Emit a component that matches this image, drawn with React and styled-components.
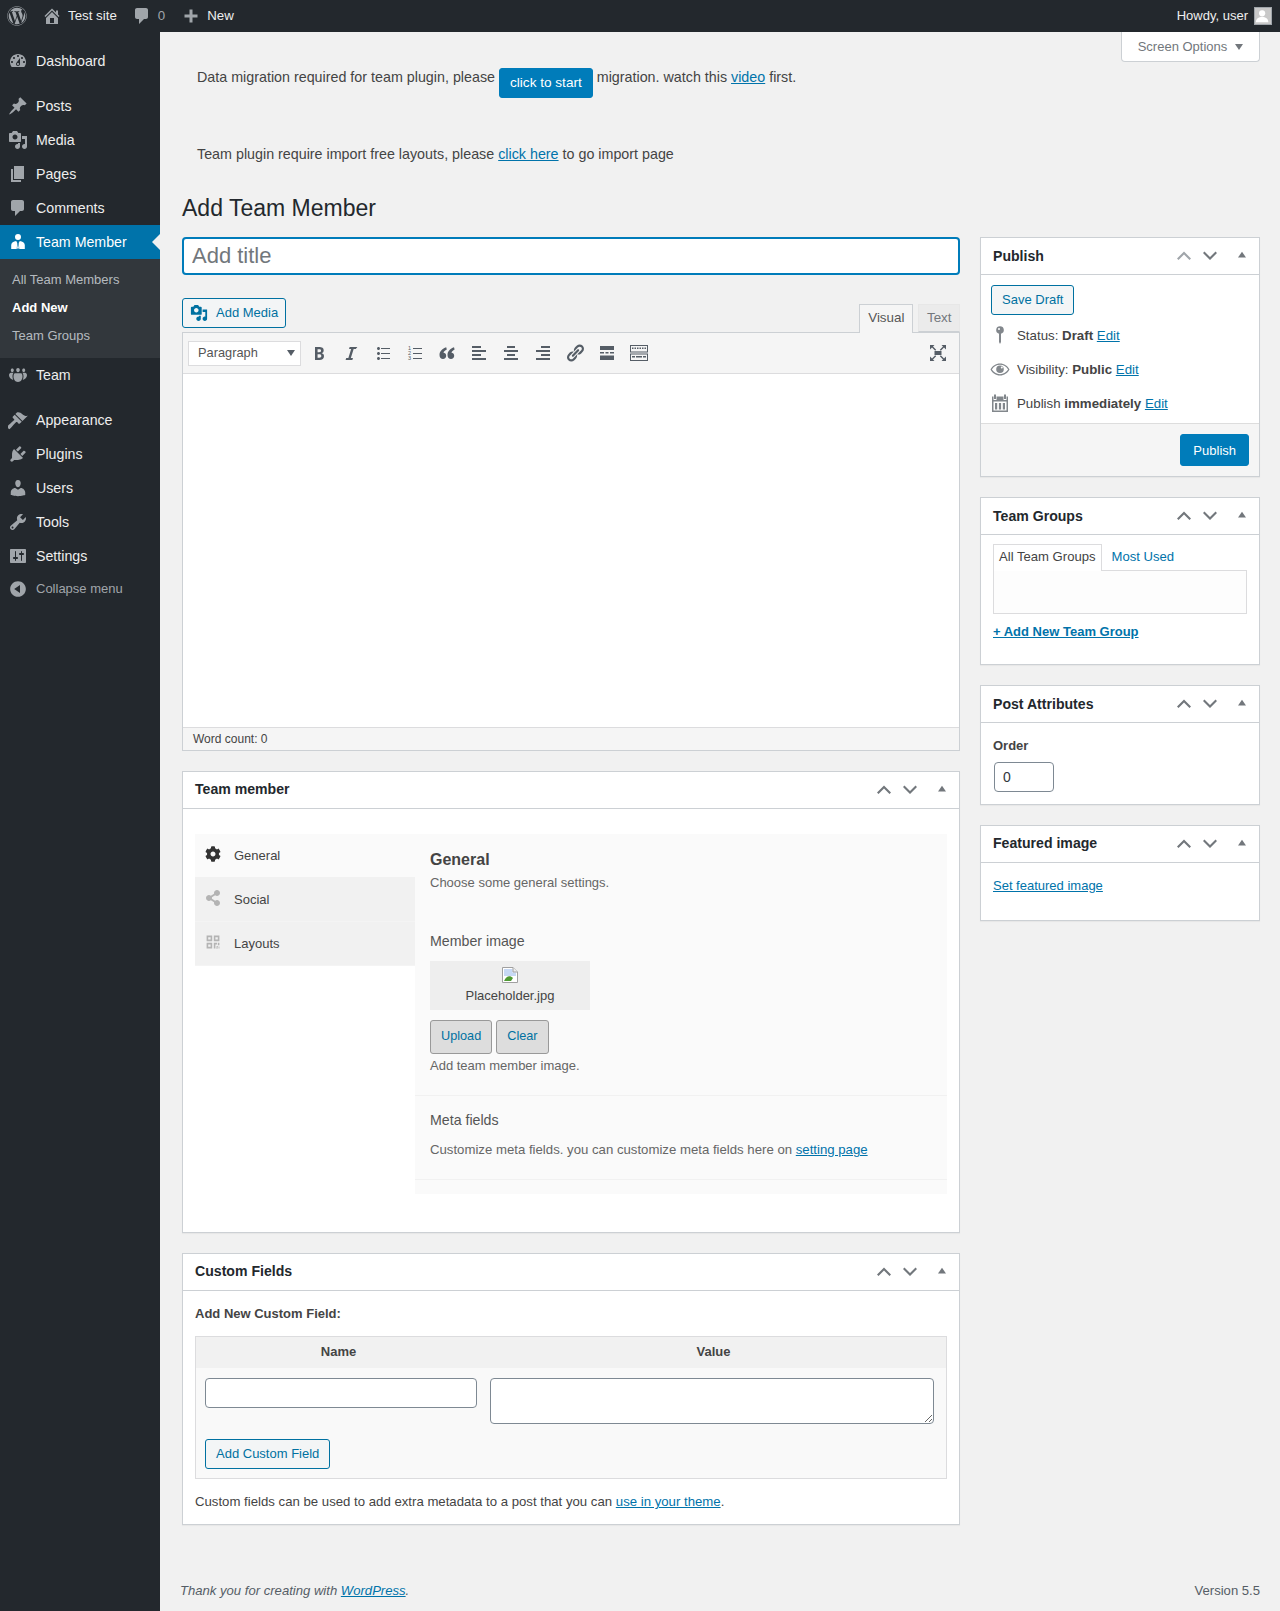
import React from 'react';
import styled, { createGlobalStyle } from 'styled-components';
import { FaWordpress, FaCog, FaShareAlt } from 'react-icons/fa';

const PATHS = {
  dashboard: 'M3.76 16h12.48c1.1-1.37 1.76-3.11 1.76-5 0-4.42-3.58-8-8-8s-8 3.58-8 8c0 1.89.66 3.63 1.76 5zM10 4c.55 0 1 .45 1 1s-.45 1-1 1-1-.45-1-1 .45-1 1-1zM6 6c.55 0 1 .45 1 1s-.45 1-1 1-1-.45-1-1 .45-1 1-1zm8 0c.55 0 1 .45 1 1s-.45 1-1 1-1-.45-1-1 .45-1 1-1zm-5.37 5.55L12 7v6c0 1.1-.9 2-2 2s-2-.9-2-2c0-.57.24-1.08.63-1.45zM4 10c.55 0 1 .45 1 1s-.45 1-1 1-1-.45-1-1 .45-1 1-1zm12 0c.55 0 1 .45 1 1s-.45 1-1 1-1-.45-1-1 .45-1 1-1zm-5 3c0-.55-.45-1-1-1s-1 .45-1 1 .45 1 1 1 1-.45 1-1z',
  post: 'M10.44 3.02l1.82-1.82 6.36 6.35-1.83 1.82c-1.05-.68-2.48-.57-3.41.36l-.75.75c-.92.93-1.04 2.35-.35 3.41l-1.83 1.82-2.41-2.41-2.8 2.79c-.42.42-3.38 2.71-3.8 2.29s1.86-3.39 2.28-3.81l2.79-2.79L4.1 9.36l1.83-1.82c1.05.69 2.48.57 3.4-.36l.75-.75c.93-.92 1.05-2.35.36-3.41z',
  media: 'M13 11V4c0-.55-.45-1-1-1h-1.67L9 1H5L3.67 3H2c-.55 0-1 .45-1 1v7c0 .55.45 1 1 1h10c.55 0 1-.45 1-1zM7 4.5c1.38 0 2.5 1.12 2.5 2.5S8.38 9.5 7 9.5 4.5 8.38 4.5 7 5.62 4.5 7 4.5zM14 6h5v10.5c0 1.38-1.12 2.5-2.5 2.5S14 17.88 14 16.5s1.12-2.5 2.5-2.5c.17 0 .34.02.5.05V9h-3V6zm-4 8.05V13h2v3.5c0 1.38-1.12 2.5-2.5 2.5S7 17.88 7 16.5 8.12 14 9.5 14c.17 0 .34.02.5.05z',
  page: 'M6 15V2h10v13H6zm-1 1h8v2H3V5h2v11z',
  comment: 'M5 2h9c1.1 0 2 .9 2 2v7c0 1.1-.9 2-2 2h-2l-5 5v-5H5c-1.1 0-2-.9-2-2V4c0-1.1.9-2 2-2z',
  businessman: 'M10 2a3 3 0 1 1 0 6 3 3 0 0 1 0-6zM3.200 17V13C3.200 10.800 5.500 9.200 8.200 9L9.300 11 8.700 17zM16.800 17V13C16.800 10.800 14.500 9.200 11.800 9L10.700 11 11.300 17zM10 11.500L10.900 16 10 17 9.100 16z',
  groups: 'M10 7.200c1.100 0 1.800-.9 1.800-2.100S11.100 3 10 3 8.200 3.900 8.200 5.100 8.900 7.200 10 7.200zM4.300 7c.9 0 1.500-.8 1.500-1.800S5.200 3.500 4.300 3.500 2.800 4.200 2.800 5.200 3.400 7 4.300 7zM15.700 7c.9 0 1.500-.8 1.500-1.800s-.6-1.700-1.500-1.700-1.500.7-1.500 1.700.6 1.800 1.500 1.800zM7 8.200C7.800 8.200 12.200 8.200 13 8.200 14 8.200 14.500 9.500 14.500 11.500 14.500 14 13 17 10 17S5.500 14 5.500 11.500C5.500 9.500 6 8.200 7 8.200zM3 7.800H5.600C4.800 8.800 4.500 10 4.500 11.500 4.500 12.800 4.800 14 5.300 15 3 14.500 1 12.500 1 10.300 1 8.800 1.900 7.800 3 7.800zM14.400 7.800H17C18.100 7.800 19 8.800 19 10.300 19 12.500 17 14.500 14.700 15 15.200 14 15.500 12.800 15.500 11.500 15.500 10 15.200 8.800 14.400 7.800z',
  appearance: 'M14.480 11.060L7.410 3.990l1.500-1.500c.5-.56 2.300-.47 3.510.32 1.210.8 1.430 1.280 2.910 2.100 1.180.64 2.450 1.260 4.450.85zm-.71.71L6.700 4.700 4.930 6.470c-.39.39-.39 1.020 0 1.410l1.060 1.060c.39.39.39 1.030 0 1.420-.6.6-6.480 5.860-6.680 6.060-.78.78 1.800 3.360 2.580 2.580.2-.2 5.460-6.080 6.060-6.680.39-.39 1.020-.39 1.410 0l1.060 1.060c.39.39 1.020.39 1.410 0z',
  plugins: 'M13.110 4.360L9.870 7.600 8 5.730l3.240-3.240c.35-.34 1.050-.2 1.560.32.52.51.66 1.210.31 1.550zm-8 1.770l.91-1.120 9.010 9.010-1.190.84c-.71.71-2.630 1.160-3.820 1.160H6.140L4.900 17.260c-.59.59-1.540.59-2.120 0-.59-.58-.59-1.530 0-2.120l1.240-1.240v-3.880c0-1.130.4-3.190 1.090-3.890zm7.260 3.970l3.240-3.240c.34-.35 1.040-.21 1.550.31.52.51.66 1.210.31 1.550l-3.240 3.250z',
  users: 'M10 9.250c-2.270 0-2.730-3.440-2.730-3.440C7 4.020 7.820 2 9.970 2c2.160 0 2.980 2.020 2.710 3.810 0 0-.41 3.440-2.680 3.440zm0 2.570L12.720 10c2.390 0 4.520 2.330 4.520 4.530v2.490s-3.650 1.130-7.240 1.130c-3.650 0-7.240-1.130-7.240-1.130v-2.490c0-2.250 1.940-4.480 4.470-4.480z',
  tools: 'M16.680 9.770c-1.340 1.340-3.300 1.670-4.950.99l-5.410 6.520c-.99.99-2.590.99-3.580 0s-.99-2.590 0-3.570l6.520-5.420c-.68-1.650-.35-3.610.99-4.950 1.280-1.280 3.120-1.620 4.720-1.060l-2.890 2.890 2.820 2.820 2.860-2.870c.53 1.580.18 3.390-1.080 4.650zM3.810 16.210c.4.39 1.040.39 1.430 0 .4-.4.4-1.040 0-1.430-.39-.4-1.030-.4-1.430 0-.39.39-.39 1.030 0 1.430z',
  settings: 'M18 16V4c0-.55-.45-1-1-1H3c-.55 0-1 .45-1 1v12c0 .55.45 1 1 1h14c.55 0 1-.45 1-1zM8 11h1c.55 0 1 .45 1 1s-.45 1-1 1H8v1.500c0 .28-.22.5-.5.5s-.5-.22-.5-.5V13H6c-.55 0-1-.45-1-1s.45-1 1-1h1V5.500c0-.28.22-.5.5-.5s.5.22.5.5V11zm5-2h-1c-.55 0-1-.45-1-1s.45-1 1-1h1V5.500c0-.28.22-.5.5-.5s.5.22.5.5V7h1c.55 0 1 .45 1 1s-.45 1-1 1h-1v5.500c0 .28-.22.5-.5.5s-.5-.22-.5-.5V9z',
  collapse: 'M10 2.160c4.330 0 7.840 3.510 7.840 7.840s-3.510 7.840-7.840 7.840S2.160 14.330 2.160 10 5.710 2.160 10 2.160zm2 11.720V6.120L6.180 9.970z',
  home: 'M16 8.500l1.530 1.530-1.060 1.060L10 4.620l-6.470 6.470-1.060-1.060L10 2.500l4 4v-2h2v4zm-6-2.460l6 5.990V18H4v-5.970zM12 17v-5H8v5h4z',
  plus: 'M16.500 8.500v3h-5v5h-3v-5h-5v-3h5v-5h3v5z',
  bold: 'M6 4v13h4.540c1.370 0 2.460-.33 3.260-1 .8-.66 1.200-1.580 1.200-2.770 0-.84-.17-1.510-.51-2.010s-.9-.85-1.670-1.030v-.09c.57-.1 1.020-.4 1.360-.9s.51-1.130.51-1.910c0-1.140-.39-1.980-1.170-2.500C12.750 4.260 11.500 4 9.780 4H6zm2.570 5.150V6.260h1.360c.73 0 1.270.11 1.610.32.34.22.51.58.51 1.070 0 .54-.16.92-.47 1.150s-.82.35-1.510.35h-1.500zm0 2.190h1.600c1.440 0 2.160.53 2.160 1.610 0 .6-.17 1.050-.51 1.340s-.86.43-1.570.43H8.570v-3.380z',
  italic: 'M14.780 6h-2.130l-2.800 9h2.120l-.62 2H4.600l.62-2h2.140l2.800-9H8.030l.62-2h7.750z',
  ul: 'M5.500 7C4.670 7 4 6.330 4 5.500 4 4.680 4.670 4 5.500 4 6.320 4 7 4.680 7 5.500 7 6.330 6.320 7 5.500 7zM8 5h9v1H8V5zm-2.500 7c-.83 0-1.500-.67-1.500-1.500C4 9.680 4.670 9 5.500 9c.82 0 1.500.68 1.500 1.500 0 .83-.68 1.500-1.500 1.500zM8 10h9v1H8v-1zm-2.500 7c-.83 0-1.500-.67-1.500-1.500 0-.82.67-1.500 1.500-1.500.82 0 1.500.68 1.500 1.500 0 .83-.68 1.500-1.500 1.500zM8 15h9v1H8v-1z',
  quote: 'M9.200 4.200C5.500 5.500 2.500 8 2.500 12 2.500 14.800 4 16 6 16 7.900 16 9.200 14.600 9.200 12.800 9.200 11 7.900 9.900 6.500 9.800 6.800 8.500 8 7.200 9.800 6.500zM17 4.200C13.300 5.500 10.500 8 10.500 12 10.500 14.800 12 16 14 16 15.900 16 17.200 14.600 17.200 12.800 17.200 11 15.900 9.900 14.500 9.800 14.800 8.500 16 7.200 17.600 6.500z',
  left: 'M12 5V3H3v2h9zm5 4V7H3v2h14zm-5 4v-2H3v2h9zm5 4v-2H3v2h14z',
  center: 'M14 5V3H6v2h8zm3 4V7H3v2h14zm-3 4v-2H6v2h8zm3 4v-2H3v2h14z',
  right: 'M17 5V3H8v2h9zm0 4V7H3v2h14zm0 4v-2H8v2h9zm0 4v-2H3v2h14z',
  link: 'M17.740 2.760c1.680 1.690 1.680 4.410 0 6.100l-1.530 1.520c-1.120 1.120-2.700 1.470-4.140 1.090l2.620-2.610.76-.77.76-.76c.84-.84.84-2.200 0-3.040-.84-.85-2.200-.85-3.040 0l-.77.76-3.380 3.380c-.37-1.440-.02-3.020 1.100-4.140l1.520-1.530c1.690-1.680 4.420-1.680 6.100 0zM8.590 13.430l5.340-5.340c.42-.42.42-1.100 0-1.520-.44-.43-1.130-.39-1.530 0l-5.330 5.340c-.42.42-.42 1.100 0 1.520.44.43 1.130.39 1.520 0zm-.76 2.290l4.140-4.150c.38 1.440.03 3.020-1.090 4.140l-1.520 1.530c-1.690 1.680-4.410 1.680-6.100 0-1.680-1.680-1.680-4.420 0-6.100l1.530-1.520c1.120-1.120 2.700-1.470 4.140-1.100l-4.140 4.150c-.85.84-.85 2.200 0 3.050.84.84 2.200.84 3.040 0z',
  more: 'M3 3h14v4H3zM3 9h4v1.500H3zM8.500 9h3v1.500h-3zM13 9h4v1.500h-4zM3 12.500h14V17H3z',
  sink: 'M1 2h18v7.500H1zM2 3v5.500h16V3zM3 4.500h1.500V6H3zM5.500 4.500H7V6H5.500zM8 4.500h1.500V6H8zM10.500 4.500H12V6h-1.500zM13 4.500h1.500V6H13zM15.500 4.500H17V6h-1.500zM1 10.500h18V18H1zM2 11.500V17h16v-5.500zM3 13h3v1.500H3zM7 13h6v1.500H7zM14 13h3v1.500h-3z',
  fullscreen: 'M6.500 8h7v4h-7zM2 2h4.500L5 3.500 8.200 6.700 7.200 7.700 4 4.500 2 6.500zM18 2v4.500L16 4.500 12.800 7.700 11.800 6.700 15 3.500 13.500 2zM2 18v-4.500L4 15.500 7.200 12.300 8.200 13.300 5 16.500 6.500 18zM18 18h-4.500L15 16.500 11.800 13.300 12.800 12.300 16 15.500 18 13.500z',
  pin: 'M10 1.300a3.800 3.800 0 0 1 1 7.470V17l-1 2-1-2V8.770a3.800 3.800 0 0 1 1-7.470zM9 3a1 1 0 1 0 0 2 1 1 0 0 0 0-2z',
  eye: 'M10 4.500C5.800 4.500 2.300 7 .5 10.500 2.300 14 5.800 16.500 10 16.500S17.700 14 19.500 10.500C17.700 7 14.200 4.500 10 4.500zM10 5.800C13.500 5.800 16.500 7.800 18.100 10.500 16.500 13.200 13.500 15.200 10 15.200S3.500 13.200 1.900 10.500C3.500 7.800 6.500 5.800 10 5.800zM10 6.500A3.800 3.800 0 1 0 10 14.100 3.800 3.800 0 0 0 10 6.500zM11.800 7.500A1 1 0 1 1 11.800 9.500 1 1 0 0 1 11.800 7.500z',
  calendar: 'M4 1.500h2V6H4zM14 1.500h2V6h-2zM2 3.500h1.500V7h3V3.500h7V7h3V3.500H18V19H2zM3.500 8.500V17.500h13V8.500zM5 10H7.200v6.500H5zM8.900 10h2.200v6.500H8.900zM12.800 10H15v6.500h-2.200z',
  tri: 'M10 6l5 7H5z',
  chevUp: 'M3 12.500L10 5.500l7 7-1.500 1.500L10 8.500 4.500 14z',
  chevDown: 'M3 7L4.500 5.500 10 11l5.500-5.500L17 7l-7 7z',
  layouts: 'M2 2h7v7H2zM4 4v3h3V4zM11 2h7v7h-7zM13 4v3h3V4zM2 11h7v7H2zM4 13v3h3v-3zM11 11h4v2h-2v5h-2zM16 11h2v3h-2zM14.500 15h1.500v1.500h-1.500zM17 15.500h1V18h-1zM14 17h2v1h-2z',
};

const GlobalStyle = createGlobalStyle`
  html, body {
    margin: 0;
    background: #f1f1f1;
    font-family: "Liberation Sans", Arial, sans-serif;
    font-size: 13px;
    line-height: 1.4;
    color: #444;
  }
  * { box-sizing: border-box; }
`;

const Svg = styled.svg`
  display: block;
  flex: none;
  fill: ${p => p.$color || 'currentColor'};
`;

function Icon({ name, size = 20, color, ...rest }) {
  return (
    <Svg viewBox="0 0 20 20" width={size} height={size} $color={color} {...rest}>
      <path d={PATHS[name]} fillRule="evenodd" />
    </Svg>
  );
}

const Page = styled.div`
  width: 1280px;
  min-height: 1611px;
  display: flex;
  flex-direction: column;
`;

const AdminBar = styled.div`
  height: 32px;
  background: #23282d;
  color: #eee;
  display: flex;
  align-items: center;
  padding: 0 8px 0 7px;
  flex: none;
`;

const BarItem = styled.div`
  display: flex;
  align-items: center;
  gap: ${p => p.$gap ?? 6}px;
  margin-right: ${p => p.$mr || 0}px;
  color: ${p => p.$color || '#eee'};
  font-size: ${p => p.$size || 13.3}px;
`;

const BarSpacer = styled.div`
  flex: 1;
`;

const Avatar = styled.div`
  width: 18px;
  height: 18px;
  border: 1px solid #a0a5aa;
  background: #c9c9c9;
  overflow: hidden;
  margin-left: 6px;
`;

const Body = styled.div`
  flex: 1;
  display: flex;
`;

const Side = styled.nav`
  width: 160px;
  flex: none;
  background: #23282d;
  padding-top: 12px;
`;

const MenuItem = styled.div`
  height: 34px;
  display: flex;
  align-items: center;
  position: relative;
  font-size: 14.2px;
  padding-left: 8px;
  gap: 8px;
  margin-bottom: ${p => p.$gapAfter || 0}px;
  background: ${p => (p.$active ? '#0073aa' : 'transparent')};
  color: ${p => (p.$active ? '#fff' : '#eee')};
  svg { fill: ${p => (p.$active ? '#fff' : '#a0a5aa')}; }
  ${p => p.$active && `
    &::after {
      content: '';
      position: absolute;
      right: 0;
      top: 50%;
      margin-top: -8px;
      border: 8px solid transparent;
      border-right-color: #f1f1f1;
      border-left: 0;
    }
  `}
`;

const MenuLabel = styled.span`
  padding-top: 2px;
`;

const Submenu = styled.div`
  background: #32373c;
  padding: 7px 0 8px;
  height: 99px;
`;

const SubItem = styled.div`
  height: 28px;
  line-height: 28px;
  padding-left: 12px;
  font-size: 13px;
  color: ${p => (p.$current ? '#fff' : 'rgba(240,245,250,.7)')};
  font-weight: ${p => (p.$current ? 600 : 400)};
`;

const CollapseItem = styled.div`
  height: 32px;
  display: flex;
  align-items: center;
  padding-left: 8px;
  gap: 8px;
  color: #a0a5aa;
  font-size: 13px;
  svg { fill: #a0a5aa; }
`;

const Content = styled.main`
  flex: 1;
  min-width: 0;
  position: relative;
  padding: 0 20px 0 22px;
  display: flex;
  flex-direction: column;
`;

const ScreenOptions = styled.div`
  position: absolute;
  top: 0;
  right: 20px;
  width: 139px;
  height: 30px;
  padding-top: 1px;
  background: #fff;
  border: 1px solid #ccd0d4;
  border-top: 0;
  border-radius: 0 0 4px 4px;
  color: #72777c;
  display: flex;
  align-items: center;
  justify-content: center;
  gap: 8px;
  font-size: 13px;
`;

const Caret = styled.span`
  width: 0;
  height: 0;
  border: 4px solid transparent;
  border-top: 6px solid ${p => p.$color || '#72777c'};
  border-bottom: 0;
`;

const Notice = styled.p`
  margin: ${p => p.$mt}px 0 0 15px;
  font-size: 14.3px;
  color: #444;
  height: ${p => p.$h}px;
  line-height: 20px;
`;

const PrimaryButton = styled.button`
  font: inherit;
  font-size: ${p => p.$size || 13.6}px;
  line-height: 1;
  background: #007cba;
  border: 1px solid #007cba;
  border-radius: 3px;
  color: #fff;
  height: ${p => p.$h || 30}px;
  padding: 0 ${p => p.$pad ?? 10}px;
  vertical-align: ${p => p.$drop || 0}px;
`;

const A = styled.a`
  color: #0073aa;
  text-decoration: underline;
  font-weight: ${p => (p.$bold ? 600 : 'inherit')};
`;

const Title = styled.h1`
  margin: 26px 0 0;
  height: 36px;
  line-height: 36px;
  font-size: 23px;
  font-weight: 400;
  color: #23282d;
`;

const Columns = styled.div`
  margin-top: 11px;
  display: flex;
  gap: 20px;
  align-items: flex-start;
`;

const MainCol = styled.div`
  width: 778px;
  flex: none;
  display: flex;
  flex-direction: column;
`;

const SideCol = styled.div`
  width: 280px;
  flex: none;
  display: flex;
  flex-direction: column;
  gap: 20px;
`;

const TitleInput = styled.input`
  width: 100%;
  height: 38px;
  border: 2px solid #007cba;
  border-radius: 4px;
  background: #fff;
  padding: 0 8px;
  font: 22px "Liberation Sans", Arial, sans-serif;
  outline: none;
  &::placeholder { color: #72777c; opacity: 1; }
`;

const EditorTop = styled.div`
  margin-top: 23px;
  display: flex;
  justify-content: space-between;
  align-items: flex-end;
  height: 34px;
`;

const SecondaryButton = styled.button`
  font: inherit;
  font-size: 13px;
  height: ${p => p.$h || 30}px;
  padding: 0 ${p => p.$pad ?? 10}px;
  border: 1px solid #0071a1;
  border-radius: 3px;
  background: #f3f5f6;
  color: #0071a1;
  display: inline-flex;
  align-items: center;
  gap: 8px;
  align-self: flex-start;
`;

const EditorTabs = styled.div`
  display: flex;
  gap: 5px;
  margin-bottom: -1px;
  position: relative;
`;

const EditorTab = styled.div`
  height: ${p => (p.$active ? 29 : 28)}px;
  padding: 0 ${p => (p.$active ? 8 : 7.5)}px;
  line-height: 25px;
  font-size: 13.4px;
  border: 1px solid ${p => (p.$active ? '#ccd0d4' : '#e7e7e7')};
  border-bottom: ${p => (p.$active ? '0' : '1px solid #ccd0d4')};
  background: ${p => (p.$active ? '#f5f5f5' : '#ebebeb')};
  color: ${p => (p.$active ? '#555' : '#72777c')};
`;

const Editor = styled.div`
  border: 1px solid #ccd0d4;
  background: #fff;
`;

const Toolbar = styled.div`
  height: 41px;
  background: #f5f5f5;
  border-bottom: 1px solid #dcdcde;
  display: flex;
  align-items: center;
  padding: 0 5px;
  color: #555d66;
`;

const FormatSelect = styled.div`
  width: 113px;
  height: 25px;
  margin-right: 2px;
  background: #fff;
  border: 1px solid #dcdcde;
  color: #555;
  padding: 0 5px 0 9px;
  display: flex;
  align-items: center;
  justify-content: space-between;
  font-size: 12.8px;
`;

const ToolButton = styled.span`
  width: 32px;
  height: 30px;
  display: flex;
  align-items: center;
  justify-content: center;
  margin-left: ${p => (p.$push ? 'auto' : '0')};
`;

const EditorArea = styled.div`
  height: 353px;
  background: #fff;
`;

const StatusBar = styled.div`
  height: 23px;
  border-top: 1px solid #dcdcde;
  background: #f5f5f5;
  font-size: 12px;
  line-height: 23px;
  padding-left: 10px;
  color: #444;
`;

const Box = styled.section`
  background: #fff;
  border: 1px solid #ccd0d4;
  box-shadow: 0 1px 1px rgba(0,0,0,.04);
  margin-top: ${p => p.$mt || 0}px;
  height: ${p => p.$h}px;
`;

const BoxHeader = styled.header`
  height: 37px;
  border-bottom: 1px solid #ccd0d4;
  display: flex;
  align-items: center;
  padding-left: 12px;
  padding-right: 5px;
  font-size: 14.1px;
  font-weight: 600;
  color: #23282d;
`;

const BoxTitle = styled.span`
  flex: 1;
  padding-top: ${p => (p.$low ? 2 : 0)}px;
`;

const HandleIcon = styled.span`
  width: 26px;
  display: flex;
  justify-content: center;
  color: ${p => (p.$off ? '#a0a5aa' : '#72777c')};
`;

const ToggleIcon = styled.span`
  width: 24px;
  margin-left: 7px;
  margin-top: -2px;
  display: flex;
  justify-content: center;
`;

function PostBox({ title, h, mt, upOff, low, children }) {
  return (
    <Box $h={h} $mt={mt}>
      <BoxHeader>
        <BoxTitle $low={low}>{title}</BoxTitle>
        <HandleIcon $off={upOff}><Icon name="chevUp" /></HandleIcon>
        <HandleIcon><Icon name="chevDown" /></HandleIcon>
        <ToggleIcon><Icon name="tri" size={16} color="#72777c" /></ToggleIcon>
      </BoxHeader>
      {children}
    </Box>
  );
}

const TabsWrap = styled.div`
  margin: 25px 12px 0;
  display: flex;
  height: 360px;
`;

const TabNav = styled.div`
  width: 220px;
  flex: none;
`;

const NavRow = styled.div`
  height: 44px;
  display: flex;
  align-items: center;
  padding: 2px 0 0 10px;
  gap: 13px;
  font-size: 13px;
  color: #444;
  background: ${p => (p.$active ? '#fafafa' : '#f1f1f1')};
  border-bottom: 1px solid ${p => (p.$active ? '#f1f1f1' : '#f4f4f4')};
  svg {
    margin-top: -5px;
    fill: ${p => (p.$active ? '#333' : '#b4b4b4')};
    color: ${p => (p.$active ? '#333' : '#b4b4b4')};
  }
`;

const TabPanel = styled.div`
  flex: 1;
  background: #fafafa;
  display: flex;
  flex-direction: column;
`;

const PanelSection = styled.div`
  padding: 0 15px;
  height: ${p => p.$h}px;
  border-bottom: ${p => (p.$noLine ? '0' : '1px solid #f1f1f1')};
`;

const PanelHeading = styled.div`
  padding-top: 16px;
  font-size: 16px;
  font-weight: 600;
  line-height: 20px;
  color: #444;
  box-sizing: content-box;
`;

const Desc = styled.div`
  font-size: ${p => p.$size || 13}px;
  line-height: 18px;
  color: #666;
  margin-top: ${p => p.$mt || 0}px;
`;

const FieldLabel = styled.div`
  font-size: 14.2px;
  line-height: 20px;
  color: #555;
  margin-top: ${p => p.$mt || 0}px;
`;

const ImageBox = styled.div`
  margin-top: 10px;
  width: 160px;
  height: 49px;
  background: #eee;
  display: flex;
  flex-direction: column;
  align-items: center;
  padding-top: 6px;
  font-size: 13px;
  color: #444;
`;

const ImageName = styled.div`
  line-height: 18px;
  margin-top: 4px;
`;

const ButtonRow = styled.div`
  margin-top: 10px;
  display: flex;
  gap: 4px;
`;

const GreyButton = styled.button`
  font: inherit;
  font-size: 12.7px;
  height: 34px;
  padding: 0 10px;
  background: #ddd;
  border: 1px solid #999;
  border-radius: 3px;
  color: #0071a1;
`;

const MiniHeading = styled.div`
  margin: ${p => p.$mt}px 0 0 12px;
  font-size: 13px;
  font-weight: 600;
  line-height: 18px;
  color: #444;
`;

const FieldsTable = styled.div`
  margin: 13px 12px 0;
  border: 1px solid #dcdcde;
  background: #f9f9f9;
  height: 143px;
`;

const FieldsHead = styled.div`
  height: 31px;
  background: #f1f1f1;
  display: grid;
  grid-template-columns: 285px 1fr;
  align-items: center;
  text-align: center;
  font-weight: 600;
  color: #444;
`;

const FieldsRow = styled.div`
  display: flex;
  padding: 10px 12px 0 9px;
  gap: 13px;
  align-items: flex-start;
  height: 71px;
`;

const TextInput = styled.input`
  border: 1px solid #7e8993;
  border-radius: 4px;
  background: #fff;
  height: ${p => p.$h || 30}px;
  width: ${p => p.$w}px;
  flex: none;
  padding: 0 8px;
  font: 14px "Liberation Sans", Arial, sans-serif;
  color: #32373c;
`;

const TextArea = styled.textarea`
  border: 1px solid #7e8993;
  border-radius: 4px;
  background: #fff;
  height: 46px;
  flex: 1;
  display: block;
`;

const RowButton = styled.div`
  padding-left: 9px;
`;

const FieldsNote = styled.p`
  margin: 14px 12px 0;
  font-size: 13.2px;
  line-height: 18px;
  color: #444;
`;

const PublishBody = styled.div`
  padding: 10px 10px 0;
  height: 148px;
  display: flex;
  flex-direction: column;
`;

const MetaRow = styled.div`
  height: 34px;
  display: flex;
  align-items: center;
  gap: 7px;
  color: #444;
  svg { fill: #82878c; margin-left: -1px; }
`;

const MetaText = styled.span`
  font-size: 13.3px;
  padding-top: 2px;
`;

const MetaList = styled.div`
  margin-top: 3px;
`;

const PublishFoot = styled.div`
  height: 53px;
  border-top: 1px solid #ddd;
  background: #f5f5f5;
  display: flex;
  justify-content: flex-end;
  align-items: center;
  padding-right: 10px;
`;

const GroupTabs = styled.div`
  margin: 9px 12px 0;
  display: flex;
  align-items: flex-end;
`;

const GroupTab = styled.div`
  height: 27px;
  padding: 0 5px;
  line-height: 24px;
  font-size: 13.1px;
  color: ${p => (p.$active ? '#444' : '#0073aa')};
  border: 1px solid ${p => (p.$active ? '#dcdcde' : 'transparent')};
  border-bottom: 0;
  margin-left: ${p => (p.$active ? 0 : 4)}px;
  background: ${p => (p.$active ? '#fff' : 'transparent')};
  margin-bottom: -1px;
  position: relative;
`;

const GroupPanel = styled.div`
  margin: 0 12px;
  height: 44px;
  border: 1px solid #dcdcde;
  background: #fdfdfd;
`;

const SideLine = styled.div`
  margin: ${p => p.$mt}px 12px 0;
  font-size: 13px;
  line-height: 18px;
`;

const OrderLabel = styled.div`
  margin: 14px 12px 0;
  font-weight: 600;
  line-height: 18px;
  color: #444;
`;

const OrderInput = styled(TextInput)`
  margin: 7px 0 0 13px;
  display: block;
`;

const Footer = styled.footer`
  margin-top: auto;
  height: 29px;
  display: flex;
  justify-content: space-between;
  line-height: 18px;
  color: #555d66;
  font-size: 13.1px;
  margin-left: -2px;
`;

const Thanks = styled.span`
  font-style: italic;
`;

const NumList = () => (
  <Svg viewBox="0 0 20 20" width={20} height={20}>
    <text x="3" y="7" fontSize="5.500" fontFamily="Liberation Sans">1</text>
    <text x="3" y="12" fontSize="5.500" fontFamily="Liberation Sans">2</text>
    <text x="3" y="17" fontSize="5.500" fontFamily="Liberation Sans">3</text>
    <path d="M8 5h9v1H8zM8 10h9v1H8zM8 15h9v1H8z" />
  </Svg>
);

const BrokenImage = () => (
  <svg width="16" height="16" viewBox="0 0 16 16">
    <path d="M0.500 0.500H11L15.500 5V15.500H0.500Z" fill="#fff" stroke="#a0a0a0" />
    <path d="M2 2H10.500V5.500H14V9H2Z" fill="#c7d9f5" />
    <path d="M2 14C4 9 8 8 11 11L9 14Z" fill="#4f9a34" />
    <path d="M11 0.500V5H15.500" fill="#eee" stroke="#a0a0a0" />
  </svg>
);

const AvatarFigure = () => (
  <svg viewBox="0 0 18 18" width="16" height="16">
    <circle cx="8" cy="6" r="3.500" fill="#fff" />
    <path d="M1 16C1 12 4 10 8 10S15 12 15 16Z" fill="#fff" />
  </svg>
);

const TOP_MENU = [
  { label: 'Dashboard', icon: 'dashboard', gapAfter: 11 },
  { label: 'Posts', icon: 'post' },
  { label: 'Media', icon: 'media' },
  { label: 'Pages', icon: 'page' },
  { label: 'Comments', icon: 'comment' },
];

const LOWER_MENU = [
  { label: 'Appearance', icon: 'appearance' },
  { label: 'Plugins', icon: 'plugins' },
  { label: 'Users', icon: 'users' },
  { label: 'Tools', icon: 'tools' },
  { label: 'Settings', icon: 'settings' },
];

const TOOLS = ['bold', 'italic', 'ul', 'ol', 'quote', 'left', 'center', 'right', 'link', 'more', 'sink'];

function App() {
  return (
    <Page>
      <GlobalStyle />
      <AdminBar>
        <BarItem $mr={15}><FaWordpress size={20} color="#a0a5aa" /></BarItem>
        <BarItem $mr={15}><Icon name="home" color="#a0a5aa" />Test site</BarItem>
        <BarItem $mr={16} $color="#a0a5aa" $gap={6}><Icon name="comment" />0</BarItem>
        <BarItem $gap={6}><Icon name="plus" color="#a0a5aa" />New</BarItem>
        <BarSpacer />
        <BarItem $gap={0} $size={13}>Howdy, user<Avatar><AvatarFigure /></Avatar></BarItem>
      </AdminBar>

      <Body>
        <Side>
          {TOP_MENU.map(m => (
            <MenuItem key={m.label} $gapAfter={m.gapAfter}><Icon name={m.icon} /><MenuLabel>{m.label}</MenuLabel></MenuItem>
          ))}
          <MenuItem $active><Icon name="businessman" /><MenuLabel>Team Member</MenuLabel></MenuItem>
          <Submenu>
            <SubItem>All Team Members</SubItem>
            <SubItem $current>Add New</SubItem>
            <SubItem>Team Groups</SubItem>
          </Submenu>
          <MenuItem $gapAfter={11}><Icon name="groups" /><MenuLabel>Team</MenuLabel></MenuItem>
          {LOWER_MENU.map(m => (
            <MenuItem key={m.label}><Icon name={m.icon} /><MenuLabel>{m.label}</MenuLabel></MenuItem>
          ))}
          <CollapseItem><Icon name="collapse" />Collapse menu</CollapseItem>
        </Side>

        <Content>
          <ScreenOptions>Screen Options<Caret /></ScreenOptions>
          <Notice $mt={35} $h={31}>
            Data migration required for team plugin, please <PrimaryButton $drop={-5}>click to start</PrimaryButton> migration. watch this <A>video</A> first.
          </Notice>
          <Notice $mt={46} $h={20}>
            Team plugin require import free layouts, please <A>click here</A> to go import page
          </Notice>
          <Title>Add Team Member</Title>

          <Columns>
            <MainCol>
              <TitleInput placeholder="Add title" />
              <EditorTop>
                <SecondaryButton $pad={7}><Icon name="media" size={18} />Add Media</SecondaryButton>
                <EditorTabs>
                  <EditorTab $active>Visual</EditorTab>
                  <EditorTab>Text</EditorTab>
                </EditorTabs>
              </EditorTop>
              <Editor>
                <Toolbar>
                  <FormatSelect>Paragraph<Caret $color="#555d66" /></FormatSelect>
                  {TOOLS.map(t => (
                    <ToolButton key={t}>{t === 'ol' ? <NumList /> : <Icon name={t} />}</ToolButton>
                  ))}
                  <ToolButton $push><Icon name="fullscreen" /></ToolButton>
                </Toolbar>
                <EditorArea />
                <StatusBar>Word count: 0</StatusBar>
              </Editor>

              <PostBox title="Team member" h={462} mt={20}>
                <TabsWrap>
                  <TabNav>
                    <NavRow $active><FaCog size={16} />General</NavRow>
                    <NavRow><FaShareAlt size={16} />Social</NavRow>
                    <NavRow><Icon name="layouts" size={16} />Layouts</NavRow>
                  </TabNav>
                  <TabPanel>
                    <PanelSection $h={262}>
                      <PanelHeading>General</PanelHeading>
                      <Desc $mt={4}>Choose some general settings.</Desc>
                      <FieldLabel $mt={39}>Member image</FieldLabel>
                      <ImageBox>
                        <BrokenImage />
                        <ImageName>Placeholder.jpg</ImageName>
                      </ImageBox>
                      <ButtonRow>
                        <GreyButton>Upload</GreyButton>
                        <GreyButton>Clear</GreyButton>
                      </ButtonRow>
                      <Desc $mt={3}>Add team member image.</Desc>
                    </PanelSection>
                    <PanelSection $h={84}>
                      <FieldLabel $mt={14}>Meta fields</FieldLabel>
                      <Desc $mt={11} $size={13.2}>Customize meta fields. you can customize meta fields here on <A>setting page</A></Desc>
                    </PanelSection>
                    <PanelSection $h={14} $noLine />
                  </TabPanel>
                </TabsWrap>
              </PostBox>

              <PostBox title="Custom Fields" h={272} mt={20}>
                <MiniHeading $mt={14}>Add New Custom Field:</MiniHeading>
                <FieldsTable>
                  <FieldsHead>
                    <span>Name</span>
                    <span>Value</span>
                  </FieldsHead>
                  <FieldsRow>
                    <TextInput $w={272} />
                    <TextArea />
                  </FieldsRow>
                  <RowButton><SecondaryButton>Add Custom Field</SecondaryButton></RowButton>
                </FieldsTable>
                <FieldsNote>Custom fields can be used to add extra metadata to a post that you can <A>use in your theme</A>.</FieldsNote>
              </PostBox>
            </MainCol>

            <SideCol>
              <PostBox title="Publish" h={240} upOff low>
                <PublishBody>
                  <SecondaryButton>Save Draft</SecondaryButton>
                  <MetaList>
                    <MetaRow><Icon name="pin" /><MetaText>Status: <b>Draft</b> <A>Edit</A></MetaText></MetaRow>
                    <MetaRow><Icon name="eye" /><MetaText>Visibility: <b>Public</b> <A>Edit</A></MetaText></MetaRow>
                    <MetaRow><Icon name="calendar" /><MetaText>Publish <b>immediately</b> <A>Edit</A></MetaText></MetaRow>
                  </MetaList>
                </PublishBody>
                <PublishFoot><PrimaryButton $h={32} $pad={12} $size={13}>Publish</PrimaryButton></PublishFoot>
              </PostBox>

              <PostBox title="Team Groups" h={168} low>
                <GroupTabs>
                  <GroupTab $active>All Team Groups</GroupTab>
                  <GroupTab>Most Used</GroupTab>
                </GroupTabs>
                <GroupPanel />
                <SideLine $mt={9}><A $bold>+ Add New Team Group</A></SideLine>
              </PostBox>

              <PostBox title="Post Attributes" h={120} low>
                <OrderLabel>Order</OrderLabel>
                <OrderInput $w={60} defaultValue="0" />
              </PostBox>

              <PostBox title="Featured image" h={96}>
                <SideLine $mt={14}><A>Set featured image</A></SideLine>
              </PostBox>
            </SideCol>
          </Columns>

          <Footer>
            <Thanks>Thank you for creating with <A>WordPress</A>.</Thanks>
            <span>Version 5.5</span>
          </Footer>
        </Content>
      </Body>
    </Page>
  );
}

export default App;
